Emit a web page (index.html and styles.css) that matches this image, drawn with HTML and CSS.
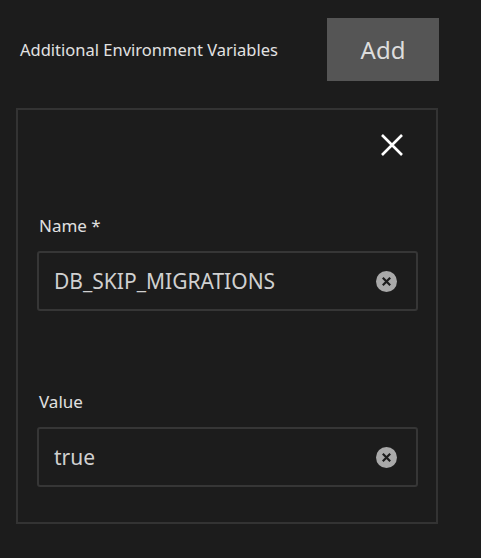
FILE: index.html
```html
<!DOCTYPE html>
<html>
    <head>
        <meta charset="utf-8">
        <title>Environment Variables</title>
        <link rel="stylesheet" href="styles.css">
    </head>
    <body>
        <div class="page">
            <div class="header">
                <span class="title">Additional Environment Variables</span>
                <button class="btn-add">Add</button>
            </div>

            <div class="card">
                <div class="card-top">
                    <a class="btn-x" href="#">
                        <svg width="24" height="24" viewBox="0 0 24 24">
                            <path d="M2 2L22 22M22 2L2 22" stroke="#fff" stroke-width="2.6" fill="none"/>
                        </svg>
                    </a>
                </div>

                <div class="field">
                    <label>Name *</label>
                    <div class="input">
                        <span class="val">DB_SKIP_MIGRATIONS</span>
                        <span class="clear">
                            <svg width="21" height="21" viewBox="0 0 21 21">
                                <circle cx="10.5" cy="10.5" r="10.5" fill="#a9a9a9"/>
                                <path d="M6.8 6.8L14.2 14.2M14.2 6.8L6.8 14.2" stroke="#1c1c1c" stroke-width="2.2"/>
                            </svg>
                        </span>
                    </div>
                </div>

                <div class="field second">
                    <label>Value</label>
                    <div class="input">
                        <span class="val">true</span>
                        <span class="clear">
                            <svg width="21" height="21" viewBox="0 0 21 21">
                                <circle cx="10.5" cy="10.5" r="10.5" fill="#a9a9a9"/>
                                <path d="M6.8 6.8L14.2 14.2M14.2 6.8L6.8 14.2" stroke="#1c1c1c" stroke-width="2.2"/>
                            </svg>
                        </span>
                    </div>
                </div>
            </div>
        </div>
    </body>
</html>
```

FILE: styles.css
```css
html,body{
    margin: 0; padding: 0;
    background: #1c1c1c;
    font-family: "Noto Sans", "Open Sans", sans-serif;
    color: #e0e0e0;
}
.page{
    width: 423px;
    padding: 18px 0 0 16px;
}
.header{
    display: flex;
    align-items: center;
    justify-content: space-between;
}
.title{
    padding-left: 4px;
    font-size: 16.5px;
    color: #e2e2e2;
}
.btn-add{
    width: 112px;
    height: 63px;
    border: none;
    background: #555;
    color: #ddd;
    font-family: inherit;
    font-size: 24px;
    padding: 0;
}
.card{
    margin-top: 27px;
    width: 422px;
    box-sizing: border-box;
    border: 2px solid #333;
    padding: 23px 18px 35px 19px;
}
.card-top{
    display: flex;
    justify-content: flex-end;
    padding-right: 14px;
    height: 24px;
}
.btn-x{
    display: block;
    width: 24px;
    height: 24px;
}
.btn-x svg{
    display: block;
}
.field{
    margin-top: 59px;
}
.field.second{
    margin-top: 81px;
}
.field label{
    display: block;
    padding-left: 2px;
    font-size: 17px;
    line-height: 20px;
    margin-bottom: 15px;
    color: #e0e0e0;
}
.input{
    height: 60px;
    box-sizing: border-box;
    border: 2px solid #363636;
    border-radius: 3px;
    display: flex;
    align-items: center;
    justify-content: space-between;
    padding: 0 19px 0 15px;
}
.input .val{
    font-size: 21px;
    color: #d0d0d0;
}
.clear svg{
    display: block;
}
```
